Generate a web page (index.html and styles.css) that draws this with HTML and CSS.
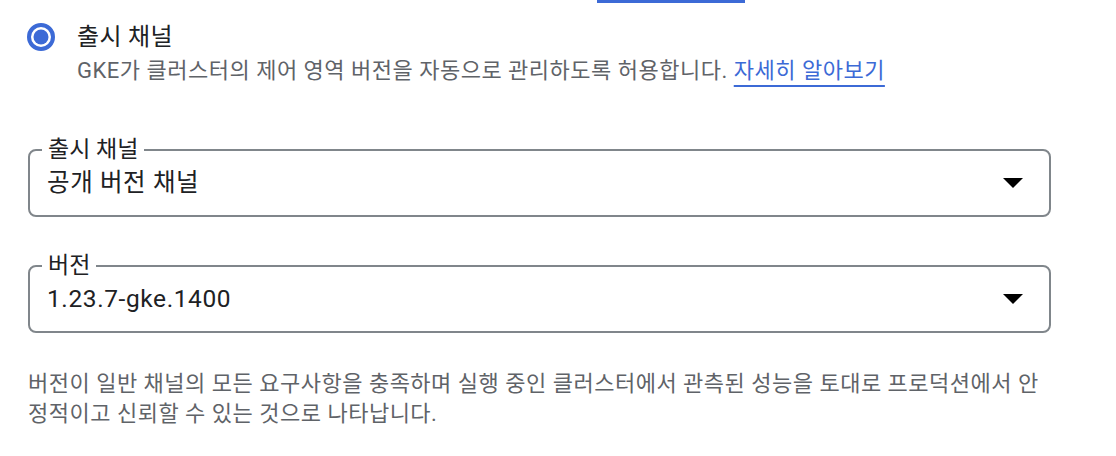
FILE: index.html
```html
<!DOCTYPE html>
<html lang="ko">
    <head>
        <meta charset="utf-8">
        <meta name="viewport" content="width=device-width, initial-scale=1">
        <title>출시 채널</title>
        <link rel="stylesheet" href="styles.css">
    </head>
    <body>
        <div class="panel">
            <div class="cutoff"></div>
            <div class="option">
                <svg class="radio" width="28" height="28" viewBox="0 0 28 28">
                    <circle cx="14" cy="14" r="12" fill="none" stroke="#3c6ad6" stroke-width="4"/>
                    <circle cx="14" cy="14" r="7.5" fill="#3c6ad6"/>
                </svg>
                <div class="option-text">
                    <div class="option-title">출시 채널</div>
                    <div class="option-desc">GKE가 클러스터의 제어 영역 버전을 자동으로 관리하도록 허용합니다. <a href="#">자세히 알아보기</a></div>
                </div>
            </div>
            <fieldset class="select">
                <legend>출시 채널</legend>
                <div class="field-row">
                    <span class="value">공개 버전 채널</span>
                    <svg class="arrow" width="20" height="10" viewBox="0 0 20 10"><polygon points="0,0 20,0 10,10"/></svg>
                </div>
            </fieldset>
            <fieldset class="select select-next">
                <legend>버전</legend>
                <div class="field-row">
                    <span class="value">1.23.7-gke.1400</span>
                    <svg class="arrow" width="20" height="10" viewBox="0 0 20 10"><polygon points="0,0 20,0 10,10"/></svg>
                </div>
            </fieldset>
            <p class="hint">버전이 일반 채널의 모든 요구사항을 충족하며 실행 중인 클러스터에서 관측된 성능을 토대로 프로덕션에서 안정적이고 신뢰할 수 있는 것으로 나타납니다.</p>
        </div>
    </body>
</html>
```

FILE: styles.css
```css
body{
    margin: 0;
    background-color: #fff;
    color: #202124;
    font-family: Roboto, "Noto Sans CJK KR", sans-serif;
}
a:link, a:visited{
    color: #3c6ad6;
    text-decoration: underline;
    text-decoration-thickness: 2px;
    text-underline-offset: 7px;
}
.panel{
    padding: 0 65px 0 28px;
}
.cutoff{
    height: 3px;
    width: 148px;
    margin-left: 569px;
    background-color: #3c6ad6;
}
.option{
    display: flex;
    gap: 22px;
    margin-top: 19px;
}
.radio{
    flex: none;
    margin: 1px 0 0 -1px;
}
.option-title{
    font-size: 24px;
    line-height: 30px;
    letter-spacing: 0.3px;
}
.option-desc{
    margin-top: 4px;
    font-size: 22px;
    line-height: 30px;
    color: #5f6368;
    letter-spacing: 0.5px;
}
.select{
    margin: 51px 0 0;
    padding: 0;
    min-width: 0;
    border: 2px solid #80868b;
    border-radius: 8px;
}
.select-next{
    margin-top: 36px;
}
.select legend{
    margin-left: 12px;
    padding: 0 6px;
    font-size: 23px;
    line-height: 26px;
}
.field-row{
    display: flex;
    align-items: center;
    padding: 5px 26px 17px 17px;
}
.value{
    flex: 1;
    font-size: 24.5px;
    line-height: 30px;
    letter-spacing: 0.6px;
}
.arrow{
    flex: none;
    fill: #000;
}
.hint{
    margin: 36px 0 0;
    padding-right: 8px;
    font-size: 22px;
    line-height: 30px;
    color: #5f6368;
    letter-spacing: 0.5px;
    word-break: break-all;
    line-break: anywhere;
}
```
